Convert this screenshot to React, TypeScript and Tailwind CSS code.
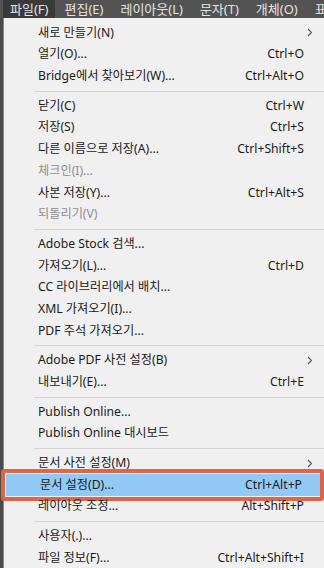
import React from "react";

type Item =
  | { kind: "sep" }
  | {
      kind?: "item";
      label: string;
      shortcut?: string;
      submenu?: boolean;
      disabled?: boolean;
      active?: boolean;
    };

const topMenus = ["파일(F)", "편집(E)", "레이아웃(L)", "문자(T)", "개체(O)", "표"];

const items: Item[] = [
  { label: "새로 만들기(N)", submenu: true },
  { label: "열기(O)...", shortcut: "Ctrl+O" },
  { label: "Bridge에서 찾아보기(W)...", shortcut: "Ctrl+Alt+O" },
  { kind: "sep" },
  { label: "닫기(C)", shortcut: "Ctrl+W" },
  { label: "저장(S)", shortcut: "Ctrl+S" },
  { label: "다른 이름으로 저장(A)...", shortcut: "Ctrl+Shift+S" },
  { label: "체크인(I)...", disabled: true },
  { label: "사본 저장(Y)...", shortcut: "Ctrl+Alt+S" },
  { label: "되돌리기(V)", disabled: true },
  { kind: "sep" },
  { label: "Adobe Stock 검색..." },
  { label: "가져오기(L)...", shortcut: "Ctrl+D" },
  { label: "CC 라이브러리에서 배치..." },
  { label: "XML 가져오기(I)..." },
  { label: "PDF 주석 가져오기..." },
  { kind: "sep" },
  { label: "Adobe PDF 사전 설정(B)", submenu: true },
  { label: "내보내기(E)...", shortcut: "Ctrl+E" },
  { kind: "sep" },
  { label: "Publish Online..." },
  { label: "Publish Online 대시보드" },
  { kind: "sep" },
  { label: "문서 사전 설정(M)", submenu: true },
  { label: "문서 설정(D)...", shortcut: "Ctrl+Alt+P", active: true },
  { label: "레이아웃 조정...", shortcut: "Alt+Shift+P" },
  { kind: "sep" },
  { label: "사용자(.)..." },
  { label: "파일 정보(F)...", shortcut: "Ctrl+Alt+Shift+I" },
];

function Chevron() {
  return (
    <svg width="6" height="9" viewBox="0 0 6 9" className="absolute right-[11px]">
      <path d="M1 1 L4.5 4.5 L1 8" fill="none" stroke="#555" strokeWidth="1.1" />
    </svg>
  );
}

export default function App() {
  return (
    <div
      className="w-[324px] h-[568px] overflow-hidden bg-[#535353] text-[12.2px] leading-none"
      style={{ fontFamily: '"Noto Sans", "Noto Sans CJK KR", sans-serif' }}
    >
      {/* 상단 메뉴바 */}
      <div className="h-[18px] flex items-center text-[#e4e4e4] text-[13px] whitespace-nowrap">
        {topMenus.map((m, i) => (
          <div
            key={m}
            className={
              i === 0
                ? "h-full shrink-0 flex items-center ml-[3px] px-[7px] bg-[#3a3a3a]"
                : "h-full shrink-0 flex items-center px-[8px] ml-[1px]"
            }
          >
            {m}
          </div>
        ))}
      </div>

      {/* 드롭다운 */}
      <div className="flex h-[550px]">
        <div className="w-[3px] bg-[#4a4a4a]" />
        <div className="flex-1 bg-[#f0f0f0] border-l border-[#8a8a8a] pt-[4px] text-[#1a1a1a] whitespace-nowrap">
          {items.map((it, i) =>
            it.kind === "sep" ? (
              <div key={i} className="h-[8px] flex items-center pl-[30px]">
                <div className="h-px w-full bg-[#d5d5d5]" />
              </div>
            ) : (
              <div
                key={i}
                className={
                  "relative h-[21.7px] flex items-center pl-[34px] pr-[20px] " +
                  (it.active ? "mx-[2px] pl-[32px] pr-[18px] bg-[#91c9f7]" : "")
                }
              >
                <span className={it.disabled ? "text-[#8f8f8f]" : ""}>{it.label}</span>
                <span className="ml-auto">{it.shortcut}</span>
                {it.submenu && <Chevron />}
                {it.active && (
                  <span className="absolute -left-[5px] -right-[2px] -top-[5px] -bottom-[5px] border-[4px] border-[#dd6648] rounded-[3px]" />
                )}
              </div>
            )
          )}
        </div>
      </div>
    </div>
  );
}
